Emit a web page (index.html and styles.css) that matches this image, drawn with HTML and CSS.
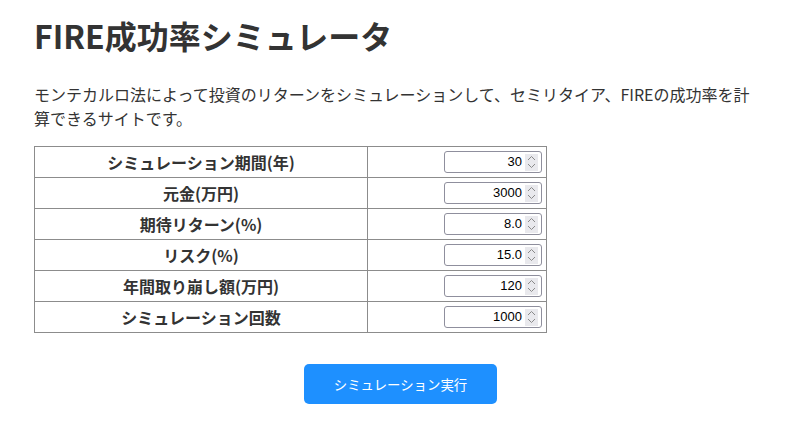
FILE: index.html
```html
<!DOCTYPE html>
<html lang="ja">
<head>
<meta charset="utf-8">
<title>FIRE成功率シミュレータ</title>
<link rel="stylesheet" href="styles.css">
</head>
<body>
<div class="page">
  <h1 class="title">FIRE成功率シミュレータ</h1>
  <p class="lead">モンテカルロ法によって投資のリターンをシミュレーションして、セミリタイア、FIREの成功率を計算できるサイトです。</p>
  <table class="params">
    <tr><th>シミュレーション期間(年)</th><td><div class="num"><span class="val">30</span><span class="spin"><svg width="9" height="14" viewBox="0 0 9 14"><path d="M1 5 L4.5 1.5 L8 5 M1 9 L4.5 12.5 L8 9" fill="none" stroke="#8a8a8a" stroke-width="1"/></svg></span></div></td></tr>
    <tr><th>元金(万円)</th><td><div class="num"><span class="val">3000</span><span class="spin"><svg width="9" height="14" viewBox="0 0 9 14"><path d="M1 5 L4.5 1.5 L8 5 M1 9 L4.5 12.5 L8 9" fill="none" stroke="#8a8a8a" stroke-width="1"/></svg></span></div></td></tr>
    <tr><th>期待リターン(%)</th><td><div class="num"><span class="val">8.0</span><span class="spin"><svg width="9" height="14" viewBox="0 0 9 14"><path d="M1 5 L4.5 1.5 L8 5 M1 9 L4.5 12.5 L8 9" fill="none" stroke="#8a8a8a" stroke-width="1"/></svg></span></div></td></tr>
    <tr><th>リスク(%)</th><td><div class="num"><span class="val">15.0</span><span class="spin"><svg width="9" height="14" viewBox="0 0 9 14"><path d="M1 5 L4.5 1.5 L8 5 M1 9 L4.5 12.5 L8 9" fill="none" stroke="#8a8a8a" stroke-width="1"/></svg></span></div></td></tr>
    <tr><th>年間取り崩し額(万円)</th><td><div class="num"><span class="val">120</span><span class="spin"><svg width="9" height="14" viewBox="0 0 9 14"><path d="M1 5 L4.5 1.5 L8 5 M1 9 L4.5 12.5 L8 9" fill="none" stroke="#8a8a8a" stroke-width="1"/></svg></span></div></td></tr>
    <tr><th>シミュレーション回数</th><td><div class="num"><span class="val">1000</span><span class="spin"><svg width="9" height="14" viewBox="0 0 9 14"><path d="M1 5 L4.5 1.5 L8 5 M1 9 L4.5 12.5 L8 9" fill="none" stroke="#8a8a8a" stroke-width="1"/></svg></span></div></td></tr>
  </table>
  <div class="actions">
    <button class="run">シミュレーション実行</button>
  </div>
</div>
</body>
</html>
```

FILE: styles.css
```css
html, body {
  margin: 0;
  padding: 0;
  background: #ffffff;
}
body {
  font-family: "Noto Sans CJK JP", "Noto Sans", sans-serif;
  color: #333333;
}
.page {
  padding: 0 26px 0 34px;
}
.title {
  margin: 15px 0 0 0;
  font-size: 32px;
  line-height: 40px;
  font-weight: 700;
  color: #333333;
}
.lead {
  margin: 27px 0 0 0;
  font-size: 16px;
  line-height: 24px;
  color: #333333;
}
.params {
  margin-top: 16px;
  border-collapse: collapse;
  width: 513px;
}
.params th,
.params td {
  border: 1px solid #8c8c8c;
  padding: 4px 4px;
  height: 22px;
  box-sizing: content-box;
}
.params th {
  width: 324px;
  font-size: 16px;
  line-height: 22px;
  font-weight: 700;
  text-align: center;
  color: #333333;
}
.params td {
  line-height: 0;
}
.num {
  display: flex;
  align-items: center;
  justify-content: flex-end;
  box-sizing: border-box;
  width: 98px;
  height: 22px;
  margin-left: auto;
  border: 1px solid #8f8f9d;
  border-radius: 3px;
  background: #ffffff;
  padding: 0 3px 0 4px;
}
.val {
  font-family: "Liberation Sans", Arial, sans-serif;
  font-size: 13px;
  line-height: 16px;
  color: #000000;
  margin-right: 3px;
}
.spin {
  display: flex;
  align-items: center;
  justify-content: center;
  width: 13px;
  height: 17px;
  background: #e9e9ed;
}
.spin svg {
  display: block;
}
.actions {
  margin-top: 31px;
  padding-left: 270px;
}
.run {
  width: 193px;
  height: 40px;
  border: none;
  border-radius: 5px;
  background: #1e90ff;
  color: #ffffff;
  font-family: "Noto Sans CJK JP", "Noto Sans", sans-serif;
  font-size: 13.4px;
  padding: 0;
}
```
